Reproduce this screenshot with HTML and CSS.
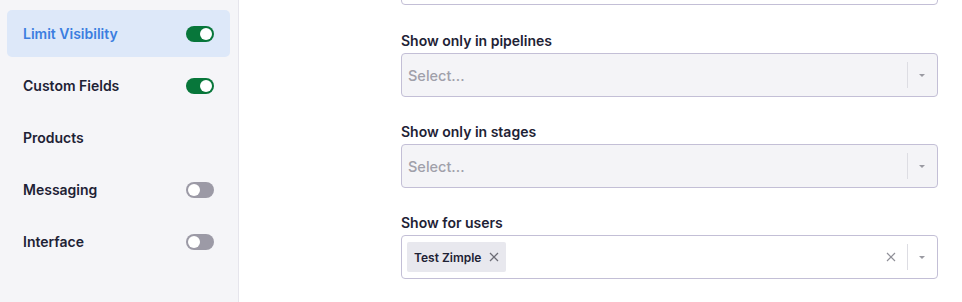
FILE: index.html
```html
<!DOCTYPE html>
<html lang="en">
<head>
    <meta charset="UTF-8">
    <meta name="viewport" content="width=device-width, initial-scale=1.0">
    <title>Settings</title>
    <link rel="stylesheet" href="styles.css">
</head>
<body>
    <div class="layout">
        <nav class="sidebar">
            <div class="nav-item active">
                <span>Limit Visibility</span>
                <span class="toggle on"></span>
            </div>
            <div class="nav-item">
                <span>Custom Fields</span>
                <span class="toggle on"></span>
            </div>
            <div class="nav-item">
                <span>Products</span>
            </div>
            <div class="nav-item">
                <span>Messaging</span>
                <span class="toggle"></span>
            </div>
            <div class="nav-item">
                <span>Interface</span>
                <span class="toggle"></span>
            </div>
        </nav>

        <main class="content">
            <div class="field first">
                <div class="select"></div>
            </div>

            <div class="field">
                <label>Show only in pipelines</label>
                <div class="select disabled">
                    <span class="placeholder">Select...</span>
                    <span class="indicators">
                        <span class="sep"></span>
                        <span class="arrow"></span>
                    </span>
                </div>
            </div>

            <div class="field">
                <label>Show only in stages</label>
                <div class="select disabled">
                    <span class="placeholder">Select...</span>
                    <span class="indicators">
                        <span class="sep"></span>
                        <span class="arrow"></span>
                    </span>
                </div>
            </div>

            <div class="field">
                <label>Show for users</label>
                <div class="select multi">
                    <span class="values">
                        <span class="chip">Test Zimple
                            <svg class="chip-x" width="10" height="10" viewBox="0 0 10 10"><path d="M1 1L9 9M9 1L1 9" stroke="#6d6d76" stroke-width="1.3" fill="none"/></svg>
                        </span>
                    </span>
                    <span class="indicators">
                        <svg class="clear" width="10" height="10" viewBox="0 0 10 10"><path d="M1 1L9 9M9 1L1 9" stroke="#909098" stroke-width="1.2" fill="none"/></svg>
                        <span class="sep"></span>
                        <span class="arrow"></span>
                    </span>
                </div>
            </div>
        </main>
    </div>
</body>
</html>
```

FILE: styles.css
```css
body {
    margin: 0;
    font-family: Inter, "Noto Sans", sans-serif;
    background-color: #fff;
    color: #1e2235;
    overflow: hidden;
}
.layout {
    display: flex;
    height: 302px;
}
.sidebar {
    width: 223px;
    padding: 10px 8px 0 7px;
    background-color: #f5f5f8;
    border-right: 1px solid #e6e5ec;
    display: flex;
    flex-direction: column;
    gap: 4px;
}
.nav-item {
    height: 47px;
    display: flex;
    align-items: center;
    justify-content: space-between;
    padding: 0 16px;
    border-radius: 5px;
    font-size: 14px;
    font-weight: 600;
    margin-bottom: 1px;
}
.nav-item.active {
    background-color: #dde8f9;
    color: #3b7ee0;
}
.toggle {
    width: 28px;
    height: 16px;
    border-radius: 8px;
    background-color: #9c9aa6;
    position: relative;
}
.toggle::after {
    content: "";
    position: absolute;
    top: 2px;
    left: 2px;
    width: 12px;
    height: 12px;
    border-radius: 50%;
    background-color: #fff;
}
.toggle.on {
    background-color: #07763a;
}
.toggle.on::after {
    left: 14px;
}
.content {
    margin-left: 162px;
    margin-top: -39px;
    width: 537px;
}
.field {
    margin-bottom: 25px;
}
.field.first {
    margin-bottom: 26px;
}
.field label {
    display: block;
    font-size: 14px;
    font-weight: 600;
    line-height: 20px;
    margin-bottom: 2px;
}
.select {
    height: 44px;
    box-sizing: border-box;
    border: 1px solid #c3bfd6;
    border-radius: 4px;
    display: flex;
    align-items: center;
    justify-content: space-between;
    background-color: #fff;
}
.select.disabled {
    background-color: #f4f4f7;
}
.placeholder {
    padding-left: 6px;
    font-size: 14.5px;
    font-weight: 500;
    color: #a0a0aa;
}
.indicators {
    display: flex;
    align-items: center;
    align-self: stretch;
    padding: 8px 0;
}
.sep {
    width: 1px;
    align-self: stretch;
    background-color: #dddde3;
}
.arrow {
    width: 0;
    height: 0;
    margin: 0 12px 0 11px;
    border-left: 3px solid transparent;
    border-right: 3px solid transparent;
    border-top: 3px solid #9a9aa2;
}
.clear {
    margin-right: 11px;
}
.values {
    padding-left: 5px;
    display: flex;
}
.chip {
    display: flex;
    align-items: center;
    height: 30px;
    padding: 0 7px;
    background-color: #e8e8ee;
    border-radius: 2px;
    font-size: 12px;
    font-weight: 600;
}
.chip-x {
    margin-left: 8px;
}
```
